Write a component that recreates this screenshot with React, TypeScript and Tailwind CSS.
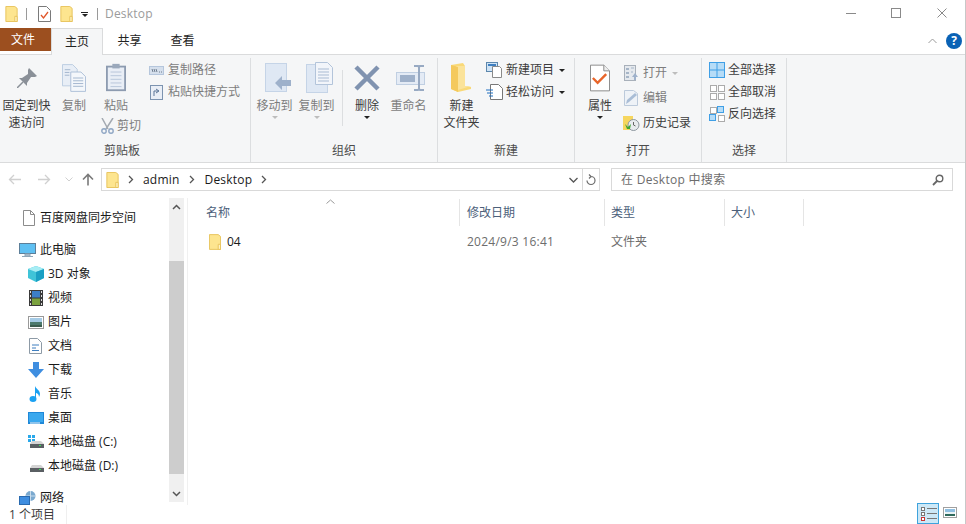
import type { ReactNode } from 'react'

const font = { fontFamily: '"Open Sans", "Noto Sans CJK SC", sans-serif' }

function FolderIcon({ w = 13, h = 17 }: { w?: number; h?: number }) {
  return (
    <svg width={w} height={h} viewBox="0 0 13 17">
      <path d="M.5.5h9.500l2.500 2v14H.5z" fill="#fde58f" stroke="#e7c25a" />
      <path d="M10 11h2.500v5.500H10z" fill="#fff3c4" stroke="#e7c25a" />
    </svg>
  )
}

function Caret({ gray }: { gray?: boolean }) {
  return <span className={`block w-0 h-0 border-x-[3px] border-x-transparent border-t-[3px] ${gray ? 'border-t-[#bdbdbd]' : 'border-t-[#222]'}`} />
}

function PinIcon() {
  return (
    <svg width="20" height="20" viewBox="0 0 20 20">
      <path d="M12 0l8 8-2 1h-4l-4 6v3L2 10h3l6-4V2z" fill="#8a9098" />
      <path d="M6 14l-6 6" stroke="#8a9098" strokeWidth="1.500" />
    </svg>
  )
}

function CopyIcon() {
  return (
    <svg width="24" height="28" viewBox="0 0 26 30">
      <path d="M.5.5h11l5 5v18H.5z" fill="#e8eef6" stroke="#b9cbe0" />
      <path d="M9.500 8.500h11l5 5v16h-16z" fill="#f4f7fb" stroke="#a9bdd6" />
      <path d="M12 15h11M12 18h11M12 21h11M12 24h11M3 6h6M3 9h5M3 12h5" stroke="#9fb3cc" />
    </svg>
  )
}

function PasteIcon() {
  return (
    <svg width="20" height="29" viewBox="0 0 22 30">
      <rect x="1" y="3" width="20" height="26" fill="#e9eef6" stroke="#8d9bb0" strokeWidth="2" />
      <rect x="7" y="0" width="8" height="5" fill="#9aa8bb" />
      <path d="M5 9h12M5 13h12M5 17h12M5 21h12M5 25h12" stroke="#b4c3d8" />
    </svg>
  )
}

function ScissorsIcon() {
  return (
    <svg width="13" height="16" viewBox="0 0 13 16">
      <path d="M1 0l6 11M12 0L5 11" stroke="#a3a9b1" strokeWidth="1.500" />
      <circle cx="3" cy="13" r="2.200" fill="none" stroke="#8fa6c4" strokeWidth="1.400" />
      <circle cx="10" cy="13" r="2.200" fill="none" stroke="#8fa6c4" strokeWidth="1.400" />
    </svg>
  )
}

function MoveIcon() {
  return (
    <svg width="27" height="29" viewBox="0 0 27 29" className="ml-[7px]">
      <rect x=".5" y=".5" width="21" height="28" fill="#dfe8f4" stroke="#c5d4e7" />
      <path d="M10 20l7-7v4h9v6h-9v4z" fill="#9eb1cb" />
    </svg>
  )
}

function CopyToIcon() {
  return (
    <svg width="27" height="31" viewBox="0 0 27 31" className="ml-[6px]">
      <rect x=".5" y="2.500" width="21" height="28" fill="#dfe8f4" stroke="#c5d4e7" />
      <path d="M9.500.5h12l5 5v17h-17z" fill="#f2f5fa" stroke="#b3c4da" />
      <path d="M12 7h11M12 10h11M12 13h11M12 16h11M12 19h11" stroke="#a9bbd3" />
    </svg>
  )
}

function DeleteIcon() {
  return (
    <svg width="26" height="26" viewBox="0 0 26 26">
      <path d="M2 2l22 22M24 2L2 24" stroke="#8093b0" strokeWidth="4.500" />
    </svg>
  )
}

function RenameIcon() {
  return (
    <svg width="29" height="26" viewBox="0 0 29 26" className="ml-[4px]">
      <rect x=".5" y="7.500" width="28" height="12" fill="#e4ebf5" stroke="#c0cfe2" />
      <rect x="4" y="10" width="15" height="7" fill="#9fb1ca" />
      <path d="M18 1h4l1 1 1-1h4M23 2v22M18 25h4l1-1 1 1h4" stroke="#98aac3" strokeWidth="2" fill="none" />
    </svg>
  )
}

function BigFolderIcon() {
  return (
    <svg width="22" height="29" viewBox="0 0 22 29">
      <path d="M0 2l12-2 2 3v20l6 1v2l-13 3-7-3z" fill="#f9d978" />
      <path d="M5 3h9v20h6l-13 4z" fill="#fbe39a" />
      <path d="M0 2l7 2v25l-7-3z" fill="#f4c95d" />
    </svg>
  )
}

function NewItemIcon() {
  return (
    <svg width="17" height="16" viewBox="0 0 17 16">
      <rect x=".5" y=".5" width="11" height="9" fill="#cfe3f5" stroke="#5c87ad" />
      <rect x="2" y="2" width="8" height="2" fill="#3f7fc0" />
      <path d="M6.500 4.500h7l2 2v9h-9z" fill="#fff" stroke="#8a8a8a" />
    </svg>
  )
}

function EasyAccessIcon() {
  return (
    <svg width="17" height="16" viewBox="0 0 17 16">
      <path d="M4.500.5h8l4 4v11h-12z" fill="#fff" stroke="#777" />
      <path d="M0 6h7M1 9h6M3 12h4" stroke="#1f6fc0" />
    </svg>
  )
}

function PathIcon() {
  return (
    <svg width="15" height="9" viewBox="0 0 15 9">
      <rect x=".5" y=".5" width="14" height="8" fill="#d5dfec" stroke="#b5c6dc" />
      <path d="M3 3l1 3M5 3l1 3M7 3l1 3M10 6h1M12 6h1" stroke="#6f7d8e" />
    </svg>
  )
}

function PropsIcon() {
  return (
    <svg width="20" height="28" viewBox="0 0 21 28">
      <path d="M.5.5h14l6 6v21H.5z" fill="#fff" stroke="#888" />
      <path d="M14.500.5v6h6" fill="#eee" stroke="#888" />
      <path d="M3 14l5 5 9-9" fill="none" stroke="#e8652a" strokeWidth="2.500" />
    </svg>
  )
}

function OpenIcon() {
  return (
    <svg width="15" height="16" viewBox="0 0 15 16">
      <rect x=".5" y=".5" width="11" height="15" fill="#e5e9ee" stroke="#a8b0ba" />
      <path d="M2 3h3v2H2zM2 7h3v2H2zM2 11h3v2H2z" fill="#a6b5c7" />
      <path d="M7 3h3M7 7h2" stroke="#a6b5c7" />
      <path d="M11 8l3 4h-2v3h-2v-3H8z" fill="#9eb1cb" />
    </svg>
  )
}

function EditIcon() {
  return (
    <svg width="15" height="16" viewBox="0 0 15 16">
      <path d="M.5.500h9l4 3v12H.5z" fill="#eef2f7" stroke="#bccadb" />
      <path d="M2 14l1-4 8-7 2 2-8 7z" fill="#a9bdd6" />
    </svg>
  )
}

function HistoryIcon() {
  return (
    <svg width="17" height="15" viewBox="0 0 17 15">
      <rect x="0" y="0" width="10" height="14" fill="#f6d65f" />
      <circle cx="10.500" cy="9" r="5.500" fill="#e8ecef" stroke="#8d969e" />
      <path d="M10.500 6v3l2 1" stroke="#666" fill="none" />
      <path d="M2 8l3 3 3-3-1 5H4z" fill="#3fa535" />
    </svg>
  )
}

function SelectIcon({ mode }: { mode: 'all' | 'none' | 'invert' }) {
  const on = '#b6dcf7'
  const cell = (x: number, y: number, filled: boolean) => (
    <rect key={`${x}-${y}`} x={x + 0.5} y={y + 0.5} width="6" height="6" fill={filled ? on : '#fff'} stroke={filled ? '#3f9fe6' : '#ababab'} />
  )
  if (mode === 'all') {
    return (
      <svg width="16" height="16" viewBox="0 0 16 16">
        <rect x=".5" y=".5" width="15" height="15" fill={on} stroke="#3f9fe6" />
        <path d="M8 0v16M0 8h16" stroke="#3f9fe6" />
      </svg>
    )
  }
  return (
    <svg width="16" height="16" viewBox="0 0 16 16">
      {mode === 'none'
        ? [cell(1, 1, false), cell(9, 1, false), cell(1, 9, false), cell(9, 9, false)]
        : [cell(1, 1, false), cell(8, 0, true), cell(0, 8, true), cell(9, 9, false)]}
    </svg>
  )
}

function BigButton({ icon, lines, width, dim, caret }: { icon: ReactNode; lines: string[]; width: number; dim?: boolean; caret?: 'gray' | 'dark' }) {
  return (
    <div className="flex flex-col items-center shrink-0" style={{ width }}>
      <div className="flex items-center justify-center w-full h-[39px]">{icon}</div>
      {lines.map((l) => (
        <div key={l} className={`text-xs leading-[17px] whitespace-nowrap ${dim ? 'text-[#7d7d7d]' : 'text-[#3c3c3c]'}`}>{l}</div>
      ))}
      {caret && <div className="mt-0.5"><Caret gray={caret === 'gray'} /></div>}
    </div>
  )
}

function SmallButton({ icon, label, dim, caret, iconW = 17 }: { icon: ReactNode; label: string; dim?: boolean; caret?: 'gray' | 'dark'; iconW?: number }) {
  return (
    <div className="flex items-center h-[22px] whitespace-nowrap">
      <div className="flex justify-center shrink-0" style={{ width: iconW }}>{icon}</div>
      <span className={`ml-[3px] text-xs ${dim ? 'text-[#7d7d7d]' : 'text-[#3c3c3c]'}`}>{label}</span>
      {caret && <span className="ml-[5px]"><Caret gray={caret === 'gray'} /></span>}
    </div>
  )
}

function Group({ width, label, labelClass = '', children }: { width: number; label: string; labelClass?: string; children: ReactNode }) {
  return (
    <div className="flex flex-col shrink-0 h-full border-r border-[#dcdee0]" style={{ width }}>
      <div className="flex-1 flex min-h-0">{children}</div>
      <div className={`h-[23px] pt-px text-center text-xs leading-[22px] text-[#4c4c4c] ${labelClass}`}>{label}</div>
    </div>
  )
}

function Ribbon() {
  return (
    <div className="flex h-[104px] bg-[#f5f6f7] border-b border-[#dadbdc] pt-[3px] shrink-0 box-content">
      <Group width={251} label="剪贴板" labelClass="pr-[6px]">
        <div className="pl-[2px]"><BigButton icon={<PinIcon />} lines={['固定到快', '速访问']} width={49} /></div>
        <div className="ml-[7px]"><BigButton icon={<CopyIcon />} lines={['复制']} width={32} dim /></div>
        <div className="ml-[5px] flex flex-col items-center w-[42px]">
          <BigButton icon={<PasteIcon />} lines={['粘贴']} width={32} dim />
          <div className="mt-[1px] self-start ml-[5px] whitespace-nowrap"><SmallButton icon={<ScissorsIcon />} label="剪切" iconW={14} dim /></div>
        </div>
        <div className="ml-[11px] pt-[1px]">
          <SmallButton dim label="复制路径" icon={<PathIcon />} />
          <SmallButton dim label="粘贴快捷方式" icon={
            <svg width="13" height="16" viewBox="0 0 13 16"><rect x=".5" y="1.500" width="12" height="14" fill="#e9eef6" stroke="#7c93b0" /><path d="M4 12V7h4M6 5l3 2-3 2" stroke="#5b7597" fill="none" /></svg>
          } />
        </div>
      </Group>
      <Group width={187} label="组织">
        <div className="ml-[5px]"><BigButton icon={<MoveIcon />} lines={['移动到']} width={37} dim caret="gray" /></div>
        <div className="ml-[5px]"><BigButton icon={<CopyToIcon />} lines={['复制到']} width={37} dim caret="gray" /></div>
        <div className="ml-[7px] mt-[12px] w-px h-[56px] bg-[#dcdee0]" />
        <div className="ml-[9px]"><BigButton icon={<DeleteIcon />} lines={['删除']} width={30} caret="dark" /></div>
        <div className="ml-[8px]"><BigButton icon={<RenameIcon />} lines={['重命名']} width={37} dim /></div>
      </Group>
      <Group width={137} label="新建">
        <div className="ml-[5px]"><BigButton icon={<BigFolderIcon />} lines={['新建', '文件夹']} width={37} /></div>
        <div className="ml-[6px] pt-[1px]">
          <SmallButton icon={<NewItemIcon />} label="新建项目" caret="dark" />
          <SmallButton icon={<EasyAccessIcon />} label="轻松访问" caret="dark" />
        </div>
      </Group>
      <Group width={127} label="打开">
        <div className="ml-[10px]"><BigButton icon={<PropsIcon />} lines={['属性']} width={30} caret="dark" /></div>
        <div className="ml-[8px] pt-[4px] flex flex-col gap-[3px]">
          <SmallButton icon={<OpenIcon />} label="打开" dim caret="gray" />
          <SmallButton icon={<EditIcon />} label="编辑" dim />
          <SmallButton icon={<HistoryIcon />} label="历史记录" />
        </div>
      </Group>
      <Group width={85} label="选择">
        <div className="ml-[6px] pt-[1px]">
          <SmallButton icon={<SelectIcon mode="all" />} label="全部选择" />
          <SmallButton icon={<SelectIcon mode="none" />} label="全部取消" />
          <SmallButton icon={<SelectIcon mode="invert" />} label="反向选择" />
        </div>
      </Group>
    </div>
  )
}

function Chevron() {
  return (
    <svg width="6" height="9" viewBox="0 0 6 9" className="shrink-0">
      <path d="M1 1l3.500 3.500L1 8" fill="none" stroke="#555" strokeWidth="1.300" />
    </svg>
  )
}

function NavRow({ icon, label, top }: { icon: ReactNode; label: string; top?: boolean }) {
  return (
    <div className={`flex items-center h-6 whitespace-nowrap ${top ? 'pl-[19px]' : 'pl-[27px]'}`}>
      <div className="w-[17px] flex justify-center shrink-0">{icon}</div>
      <span className="text-xs text-[#1a1a1a] ml-1">{label}</span>
    </div>
  )
}

const DriveIcon = ({ win }: { win?: boolean }) => (
  <svg width="16" height="14" viewBox="0 0 16 14">
    {win && <path d="M0 0h3v3H0zM4 0h3v3H4zM0 4h3v3H0zM4 4h3v3H4z" fill="#29a8ea" />}
    <path d="M2 9l2-3h9l3 3z" fill="#d4d4d4" />
    <rect x="2" y="9" width="14" height="4" fill="#5a5f63" />
    <rect x="11" y="10" width="2" height="1" fill="#39e45a" />
  </svg>
)

function Sidebar() {
  return (
    <div className="flex w-[188px] shrink-0 border-r border-[#f0f0f0] overflow-hidden">
      <div className="flex-1 min-w-0 pt-2">
        <NavRow top label="百度网盘同步空间" icon={
          <svg width="12" height="16" viewBox="0 0 12 16" className="ml-[3px]"><path d="M.5.5h7l4 4v11H.5z" fill="#fff" stroke="#8c8c8c" /><path d="M7.500.5v4h4" fill="none" stroke="#8c8c8c" /></svg>
        } />
        <div className="mt-2">
          <NavRow top label="此电脑" icon={
            <svg width="17" height="15" viewBox="0 0 17 15"><rect x=".5" y=".5" width="16" height="10" fill="#5fc0f2" stroke="#5d7f99" /><path d="M6 11h5v2H6zM3 13.500h11" stroke="#8fa6b8" fill="#b9c7d2" /></svg>
          } />
        </div>
        <NavRow label="3D 对象" icon={
          <svg width="16" height="16" viewBox="0 0 16 16"><path d="M8 0l8 3v9l-8 4-8-4V3z" fill="#3fc4d8" /><path d="M0 3l8 3 8-3-8-3z" fill="#a7edf4" /><path d="M8 6v10l8-4V3z" fill="#1ba0c4" /></svg>
        } />
        <NavRow label="视频" icon={
          <svg width="14" height="16" viewBox="0 0 14 16"><rect width="14" height="16" fill="#3a3a3a" /><rect x="3" y="1" width="8" height="6.500" fill="#3c7fc8" /><rect x="3" y="8.500" width="8" height="6.500" fill="#7ba23f" /><path d="M1 1h1v2H1zM1 5h1v2H1zM1 9h1v2H1zM1 13h1v2H1zM12 1h1v2h-1zM12 5h1v2h-1zM12 9h1v2h-1zM12 13h1v2h-1z" fill="#ddd" /></svg>
        } />
        <NavRow label="图片" icon={
          <svg width="16" height="13" viewBox="0 0 16 13"><rect x=".5" y=".5" width="15" height="12" fill="#fff" stroke="#999" /><rect x="2" y="2" width="12" height="4" fill="#a5cbe6" /><rect x="2" y="6" width="12" height="3" fill="#4c7a6e" /><rect x="2" y="9" width="12" height="2" fill="#3b5d4f" /></svg>
        } />
        <NavRow label="文档" icon={
          <svg width="13" height="16" viewBox="0 0 13 16"><path d="M.5.5h8l4 4v11H.5z" fill="#fff" stroke="#8d9aa6" /><path d="M3 7h7M3 10h4M3 12.500h7" stroke="#3f7fc0" /></svg>
        } />
        <NavRow label="下载" icon={
          <svg width="16" height="16" viewBox="0 0 16 16"><path d="M5 0h6v7h5l-8 9-8-9h5z" fill="#3f8ee0" /></svg>
        } />
        <NavRow label="音乐" icon={
          <svg width="13" height="16" viewBox="0 0 13 16"><ellipse cx="4" cy="13" rx="3.500" ry="3" fill="#1ba1f2" /><path d="M6 13V0c1 3 5 4 5 8 0 1-.5 2-1 3 0-3-2-4-3-4v6z" fill="#1ba1f2" /></svg>
        } />
        <NavRow label="桌面" icon={
          <svg width="16" height="12" viewBox="0 0 16 12"><rect width="16" height="12" fill="#1f88d8" /><rect x="1" y="1" width="14" height="9" fill="#3aa8ee" /><rect x="2" y="10.500" width="10" height="1" fill="#fff" /></svg>
        } />
        <NavRow label="本地磁盘 (C:)" icon={<DriveIcon win />} />
        <NavRow label="本地磁盘 (D:)" icon={<DriveIcon />} />
        <div className="mt-2">
          <NavRow top label="网络" icon={
            <svg width="17" height="15" viewBox="0 0 17 15"><circle cx="11.500" cy="5" r="5" fill="#7aa9cf" /><path d="M11.500 0v10M7 5h9" stroke="#c9dcec" /><rect x=".5" y="5.500" width="10" height="8" fill="#3f8ee0" stroke="#2a6bb0" /></svg>
          } />
        </div>
      </div>
      <div className="w-[15px] mr-[3px] mb-[3px] shrink-0 flex flex-col bg-[#f0f0f0]">
        <div className="h-[18px] flex items-center justify-center">
          <svg width="9" height="6" viewBox="0 0 9 6"><path d="M1 5l3.500-3.500L8 5" fill="none" stroke="#555" strokeWidth="1.500" /></svg>
        </div>
        <div className="mt-[45px] h-[213px] bg-[#cdcdcd]" />
        <div className="flex-1 flex items-end justify-center pb-[5px]">
          <svg width="9" height="6" viewBox="0 0 9 6"><path d="M1 1l3.500 3.500L8 1" fill="none" stroke="#555" strokeWidth="1.500" /></svg>
        </div>
      </div>
    </div>
  )
}

function HeaderCell({ width, label, className = '' }: { width: number; label: string; className?: string }) {
  return (
    <div className={`h-[27px] shrink-0 border-r border-[#e5e5e5] flex items-center text-xs text-[#4c607a] ${className}`} style={{ width }}>{label}</div>
  )
}

function FileList() {
  return (
    <div className="flex-1 min-w-0 pt-px">
      <div className="relative flex">
        <HeaderCell width={272} label="名称" className="pl-[18px]" />
        <HeaderCell width={145} label="修改日期" className="pl-[7px]" />
        <HeaderCell width={120} label="类型" className="pl-[6px]" />
        <HeaderCell width={79} label="大小" className="pl-[6px]" />
        <svg width="9" height="5" viewBox="0 0 9 5" className="absolute left-[138px] top-0">
          <path d="M.5 4.500L4.500 1l4 3.500" fill="none" stroke="#9a9a9a" />
        </svg>
      </div>
      <div className="flex items-center h-[22px] mt-[5px] text-xs">
        <div className="w-[272px] flex items-center pl-[21px] shrink-0">
          <FolderIcon w={12} h={16} />
          <span className="ml-[6px] text-[#1a1a1a]">04</span>
        </div>
        <div className="w-[145px] pl-[7px] text-[#6d6d6d] tracking-[0.25px] shrink-0">2024/9/3 16:41</div>
        <div className="pl-[6px] text-[#6d6d6d]">文件夹</div>
      </div>
    </div>
  )
}

export default function App() {
  return (
    <div className="w-[966px] h-[524px] bg-white overflow-hidden flex flex-col border-r border-[#c8c8c8]" style={font}>
      {/* title bar */}
      <div className="flex items-center h-[28px] shrink-0">
        <div className="flex items-center pl-[5px]">
          <FolderIcon w={13} h={16} />
          <span className="ml-2 w-px h-[12px] bg-[#9a9a9a]" />
          <span className="ml-[11px]">
            <svg width="13" height="16" viewBox="0 0 13 16"><path d="M.5.5h8l4 4v11H.5z" fill="#fff" stroke="#7a7a7a" /><path d="M3 9l2.500 3L10 6" fill="none" stroke="#e0562a" strokeWidth="1.300" /></svg>
          </span>
          <span className="ml-[9px]"><FolderIcon w={13} h={16} /></span>
          <span className="ml-[8px] flex flex-col items-center gap-px">
            <span className="block w-[7px] h-px bg-[#222]" />
            <Caret />
          </span>
          <span className="ml-[9px] w-px h-[12px] bg-[#9a9a9a]" />
          <span className="ml-[7px] text-xs tracking-[0.2px] text-[#9b9b9b]">Desktop</span>
        </div>
        <div className="ml-auto flex items-center pr-[18px] pb-[3px]">
          <span className="block w-[10px] h-px bg-[#8a8a8a] mt-[1px]" />
          <span className="ml-[35px] block w-[10px] h-[10px] border border-[#8a8a8a]" />
          <svg width="10" height="10" viewBox="0 0 10 10" className="ml-[36px]"><path d="M.5.5l9 9M9.500.5l-9 9" stroke="#8a8a8a" /></svg>
        </div>
      </div>
      {/* tabs */}
      <div className="flex h-[27px] shrink-0 border-b border-[#dadbdc] text-xs">
        <div className="w-[51px] h-[23px] bg-[#9c4f1f] text-white flex items-center justify-center pr-[5px] pt-px">文件</div>
        <div className="relative w-[52px] h-[27px] bg-[#f5f6f7] border-x border-t border-[#dadbdc] text-[#222] flex items-center justify-center">主页</div>
        <div className="w-[53px] flex items-center justify-center text-[#222]">共享</div>
        <div className="w-[53px] flex items-center justify-center text-[#222]">查看</div>
        <div className="ml-auto flex items-center pr-[3px] pb-[1px]">
          <svg width="9" height="6" viewBox="0 0 9 6" className="mr-[9px]"><path d="M.5 5l4-4 4 4" fill="none" stroke="#9a9a9a" /></svg>
          <span className="w-4 h-4 rounded-full bg-[#0a62b5] text-white text-[12px] leading-none font-bold flex items-center justify-center">?</span>
        </div>
      </div>
      <Ribbon />
      {/* address row */}
      <div className="flex items-start h-[35px] shrink-0 pt-[5px]">
        <div className="flex items-center h-[23px]">
          <svg width="13" height="11" viewBox="0 0 13 11" className="ml-2"><path d="M6 1L1.500 5.500 6 10M1.500 5.500H13" fill="none" stroke="#d0d0d0" strokeWidth="1.300" /></svg>
          <svg width="13" height="11" viewBox="0 0 13 11" className="ml-[17px]"><path d="M7 1l4.500 4.500L7 10M11.500 5.500H0" fill="none" stroke="#d0d0d0" strokeWidth="1.300" /></svg>
          <svg width="8" height="5" viewBox="0 0 8 5" className="ml-[14px]"><path d="M.5.5L4 4 7.500.5" fill="none" stroke="#d0d0d0" /></svg>
          <svg width="12" height="13" viewBox="0 0 12 13" className="ml-[9px]"><path d="M6 12.500V1.500M1 6.500l5-5 5 5" fill="none" stroke="#7a7a7a" strokeWidth="1.600" /></svg>
        </div>
        <div className="ml-[7px] w-[499px] h-[23px] border border-[#d9d9d9] flex items-center">
          <span className="ml-[4px] flex"><FolderIcon w={13} h={16} /></span>
          <span className="ml-[9px]"><Chevron /></span>
          <span className="ml-[9px] text-xs tracking-[0.2px] text-[#1a1a1a]">admin</span>
          <span className="ml-[9px]"><Chevron /></span>
          <span className="ml-[10px] text-xs tracking-[0.2px] text-[#1a1a1a]">Desktop</span>
          <span className="ml-[9px]"><Chevron /></span>
          <div className="ml-auto flex items-center h-full">
            <svg width="9" height="6" viewBox="0 0 9 6" className="mr-[4px]"><path d="M.5 1l4 4 4-4" fill="none" stroke="#555" strokeWidth="1.300" /></svg>
            <div className="w-[17px] h-full border-l border-[#d9d9d9] flex items-center justify-center">
              <svg width="10" height="12" viewBox="0 0 10 12"><path d="M5 2.500a4 4 0 1 1-4 4M3 .5l2 2-2 2" fill="none" stroke="#6b6b6b" strokeWidth="1.200" /></svg>
            </div>
          </div>
        </div>
        <div className="ml-[11px] w-[342px] h-[23px] border border-[#d9d9d9] flex items-center pl-[9px] pr-[8px]">
          <span className="text-xs tracking-[0.3px] text-[#6d6d6d]">在 Desktop 中搜索</span>
          <svg width="12" height="12" viewBox="0 0 12 12" className="ml-auto"><circle cx="7.500" cy="4.500" r="3.300" fill="none" stroke="#666" strokeWidth="1.400" /><path d="M5 7l-4 4" stroke="#666" strokeWidth="1.800" /></svg>
        </div>
      </div>
      {/* body */}
      <div className="flex-1 min-h-0 flex">
        <Sidebar />
        <FileList />
      </div>
      {/* status bar */}
      <div className="h-[19px] shrink-0 flex items-center bg-white text-xs text-[#3c3c3c]">
        <span className="pl-[9px] w-[67px] h-full flex items-center border-r border-[#efefef]">1 个项目</span>
        <div className="ml-auto flex items-end h-full pr-[8px]">
          <div className="w-[22px] h-[21px] -mt-[2px] bg-[#cce8f7] border border-[#3fa3dc] flex flex-col justify-center gap-px pl-[3px]">
            {['#777', '#777', '#c33'].map((c, i) => (
              <div key={i} className="flex items-center gap-[2px]">
                <span className="block w-1 h-1 border bg-white" style={{ borderColor: c }} />
                <span className="block w-[10px] h-px bg-[#777]" />
              </div>
            ))}
          </div>
          <svg width="14" height="11" viewBox="0 0 14 11" className="ml-[4px] mb-[6px]">
            <rect x=".5" y=".5" width="13" height="10" fill="#fff" stroke="#a0a0a0" />
            <rect x="2" y="2" width="10" height="3" fill="#8fc0e2" />
            <rect x="2" y="5" width="10" height="2" fill="#e8f2f5" />
            <rect x="2" y="7" width="10" height="2" fill="#2f6a5c" />
          </svg>
        </div>
      </div>
    </div>
  )
}
